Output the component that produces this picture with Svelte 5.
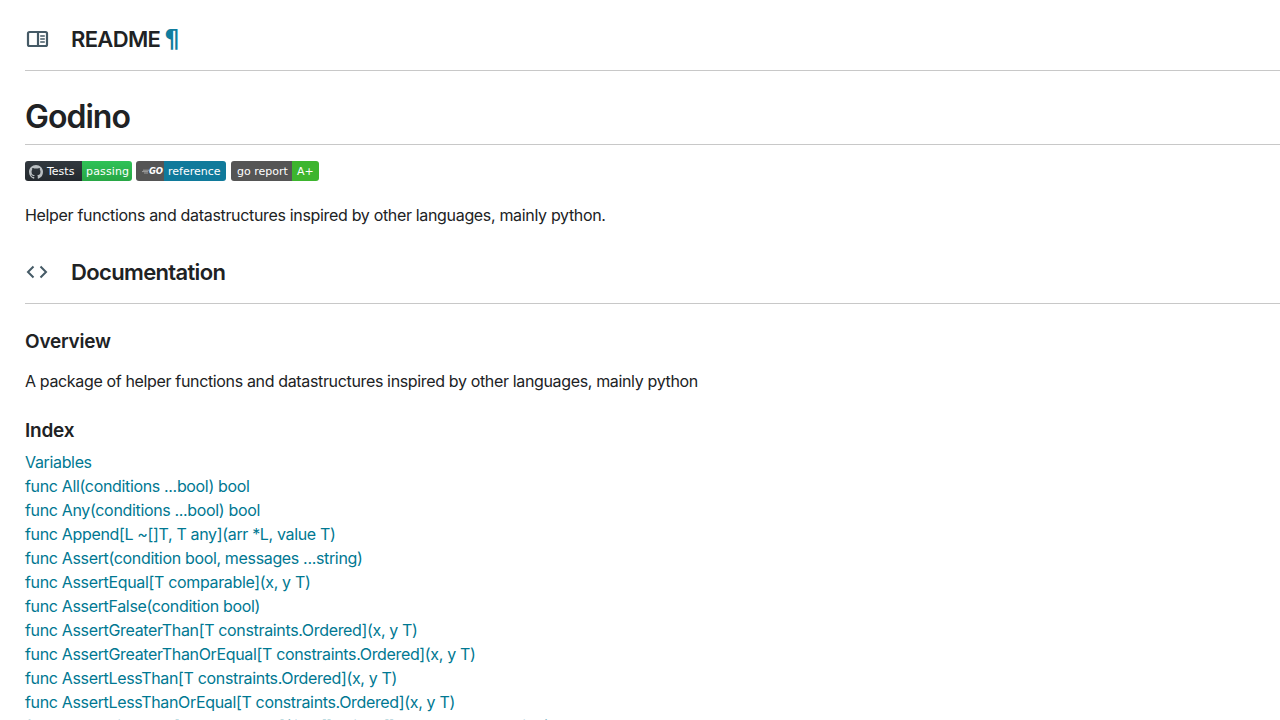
<script>
  const links = [
    'Variables',
    'func All(conditions ...bool) bool',
    'func Any(conditions ...bool) bool',
    'func Append[L ~[]T, T any](arr *L, value T)',
    'func Assert(condition bool, messages ...string)',
    'func AssertEqual[T comparable](x, y T)',
    'func AssertFalse(condition bool)',
    'func AssertGreaterThan[T constraints.Ordered](x, y T)',
    'func AssertGreaterThanOrEqual[T constraints.Ordered](x, y T)',
    'func AssertLessThan[T constraints.Ordered](x, y T)',
    'func AssertLessThanOrEqual[T constraints.Ordered](x, y T)',
    'func AssertListEqual[T comparable](list1 []T, list2 []T, messages ...string)'
  ];
</script>

<main class="page">
  <header class="section-head readme-head">
    <svg class="icon" viewBox="0 0 24 24" width="24" height="24" aria-hidden="true">
      <rect x="3" y="5" width="19" height="14" rx="1.5" fill="none" stroke="#455a66" stroke-width="2.2"/>
      <path d="M13 5v14" stroke="#455a66" stroke-width="2.2"/>
      <path d="M15.2 9h4.6M15.2 12h4.6M15.2 15h4.6" stroke="#455a66" stroke-width="1.7"/>
    </svg>
    <h2 class="readme-title">README <a href="#readme" class="para">¶</a></h2>
  </header>

  <h1 class="title">Godino</h1>

  <div class="badges">
    <span class="badge">
      <span class="b-left dark">
        <svg viewBox="0 0 16 16" width="14" height="14" aria-hidden="true"><path fill="#b9bec1" d="M8 0C3.58 0 0 3.58 0 8c0 3.54 2.29 6.53 5.47 7.59.4.07.55-.17.55-.38 0-.19-.01-.82-.01-1.49-2.01.37-2.53-.49-2.69-.94-.09-.23-.48-.94-.82-1.13-.28-.15-.68-.52-.01-.53.63-.01 1.08.58 1.23.82.72 1.21 1.87.87 2.33.66.07-.52.28-.87.51-1.07-1.78-.2-3.64-.89-3.64-3.95 0-.87.31-1.59.82-2.15-.08-.2-.36-1.02.08-2.12 0 0 .67-.21 2.2.82.64-.18 1.32-.27 2-.27s1.36.09 2 .27c1.53-1.04 2.2-.82 2.2-.82.44 1.1.16 1.92.08 2.12.51.56.82 1.27.82 2.15 0 3.07-1.87 3.75-3.65 3.95.29.25.54.73.54 1.48 0 1.07-.01 1.93-.01 2.2 0 .21.15.46.55.38A8.01 8.01 0 0 0 16 8c0-4.42-3.58-8-8-8z"/></svg>
        Tests
      </span>
      <span class="b-right green">passing</span>
    </span>
    <span class="badge">
      <span class="b-left grey go">
        <svg class="speed" viewBox="0 0 7 7" width="7" height="7" aria-hidden="true">
          <path d="M1 2.2h6M0 3.6h6M2 5h4" stroke="#bdbdbd" stroke-width="0.7"/>
        </svg>
        <span class="go-text">GO</span>
      </span>
      <span class="b-right blue">reference</span>
    </span>
    <span class="badge">
      <span class="b-left grey report">go report</span>
      <span class="b-right lime">A+</span>
    </span>
  </div>

  <p class="lead">Helper functions and datastructures inspired by other languages, mainly python.</p>

  <header class="section-head doc-head">
    <svg class="icon" viewBox="0 0 24 24" width="24" height="24" aria-hidden="true">
      <path d="M8.5 6.5 3 12l5.5 5.5M15.5 6.5 21 12l-5.5 5.5" fill="none" stroke="#455a66" stroke-width="2"/>
    </svg>
    <h2 class="doc-title">Documentation</h2>
  </header>

  <h3 class="sub overview">Overview</h3>
  <p class="overview-text">A package of helper functions and datastructures inspired by other languages, mainly python</p>

  <h3 class="sub index">Index</h3>
  <ul class="links">
    {#each links as l}
      <li><a href="#x">{l}</a></li>
    {/each}
  </ul>
</main>

<style>
  :global(body) {
    margin: 0;
    background: #fff;
    overflow: hidden;
  }
  .page {
    height: 720px;
    overflow: hidden;
    padding-left: 25px;
    font-family: Inter, "Liberation Sans", sans-serif;
    color: #202224;
    font-size: 16px;
    line-height: 24px;
    letter-spacing: -0.34px;
  }
  .section-head {
    display: flex;
    align-items: center;
    gap: 22px;
    border-bottom: 1px solid #c8c8c8;
  }
  .icon { flex: none; }
  .readme-head { height: 62px; padding-top: 8px; }
  .doc-head { height: 62px; margin-top: 14px; }
  .readme-title, .doc-title {
    margin: 0;
    font-weight: 600;
    font-size: 22px;
    line-height: 28px;
    letter-spacing: -0.65px;
  }
  .para {
    color: #107d9e;
    text-decoration: none;
    font-family: "DejaVu Sans", sans-serif;
    font-weight: 700;
    font-size: 24px;
    line-height: 1;
    letter-spacing: 0;
    margin-left: -1px;
  }
  .title {
    margin: 0;
    height: 74px;
    box-sizing: border-box;
    padding-top: 26px;
    font-size: 32px;
    line-height: 40px;
    font-weight: 600;
    letter-spacing: -1px;
    border-bottom: 1px solid #c8c8c8;
  }
  .badges {
    display: flex;
    gap: 4px;
    margin-top: 16px;
    height: 20px;
  }
  .badge {
    display: flex;
    height: 20px;
    border-radius: 3px;
    overflow: hidden;
    color: #fff;
    font-family: "DejaVu Sans", sans-serif;
    font-size: 11px;
    line-height: 20px;
    letter-spacing: 0;
  }
  .badge:last-child { margin-left: 1px; }
  .b-left, .b-right {
    display: flex;
    align-items: center;
    box-sizing: border-box;
    padding: 1px 0 0 6px;
    gap: 4px;
  }
  .dark {
    background: linear-gradient(#32393f, #24292e);
    width: 57px;
    padding-left: 4px;
  }
  .green {
    background: linear-gradient(#2fc257, #28a745);
    width: 50px;
    padding-left: 4px;
    letter-spacing: 0.15px;
  }
  .grey { background: #555; }
  .go { width: 28px; padding: 0 0 0 6px; gap: 0; }
  .speed { flex: none; }
  .go-text {
    font-family: "DejaVu Sans", sans-serif;
    font-weight: 700;
    font-style: italic;
    font-size: 8.5px;
    letter-spacing: -0.3px;
  }
  .blue { background: #107a9b; width: 62px; padding-left: 4px; }
  .report { width: 61px; }
  .lime { background: #3db52e; width: 27px; padding-left: 5px; }
  .lead {
    margin: 22px 0 0;
    letter-spacing: -0.33px;
  }
  .sub {
    margin: 0;
    font-size: 19px;
    font-weight: 600;
    line-height: 24px;
    letter-spacing: -0.22px;
  }
  .overview { margin-top: 26px; }
  .overview-text { margin: 15px 0 0; letter-spacing: -0.35px; }
  .index { margin-top: 26px; }
  .links {
    list-style: none;
    margin: 7px 0 0;
    padding: 0;
  }
  .links a {
    color: #007892;
    text-decoration: none;
  }
</style>
